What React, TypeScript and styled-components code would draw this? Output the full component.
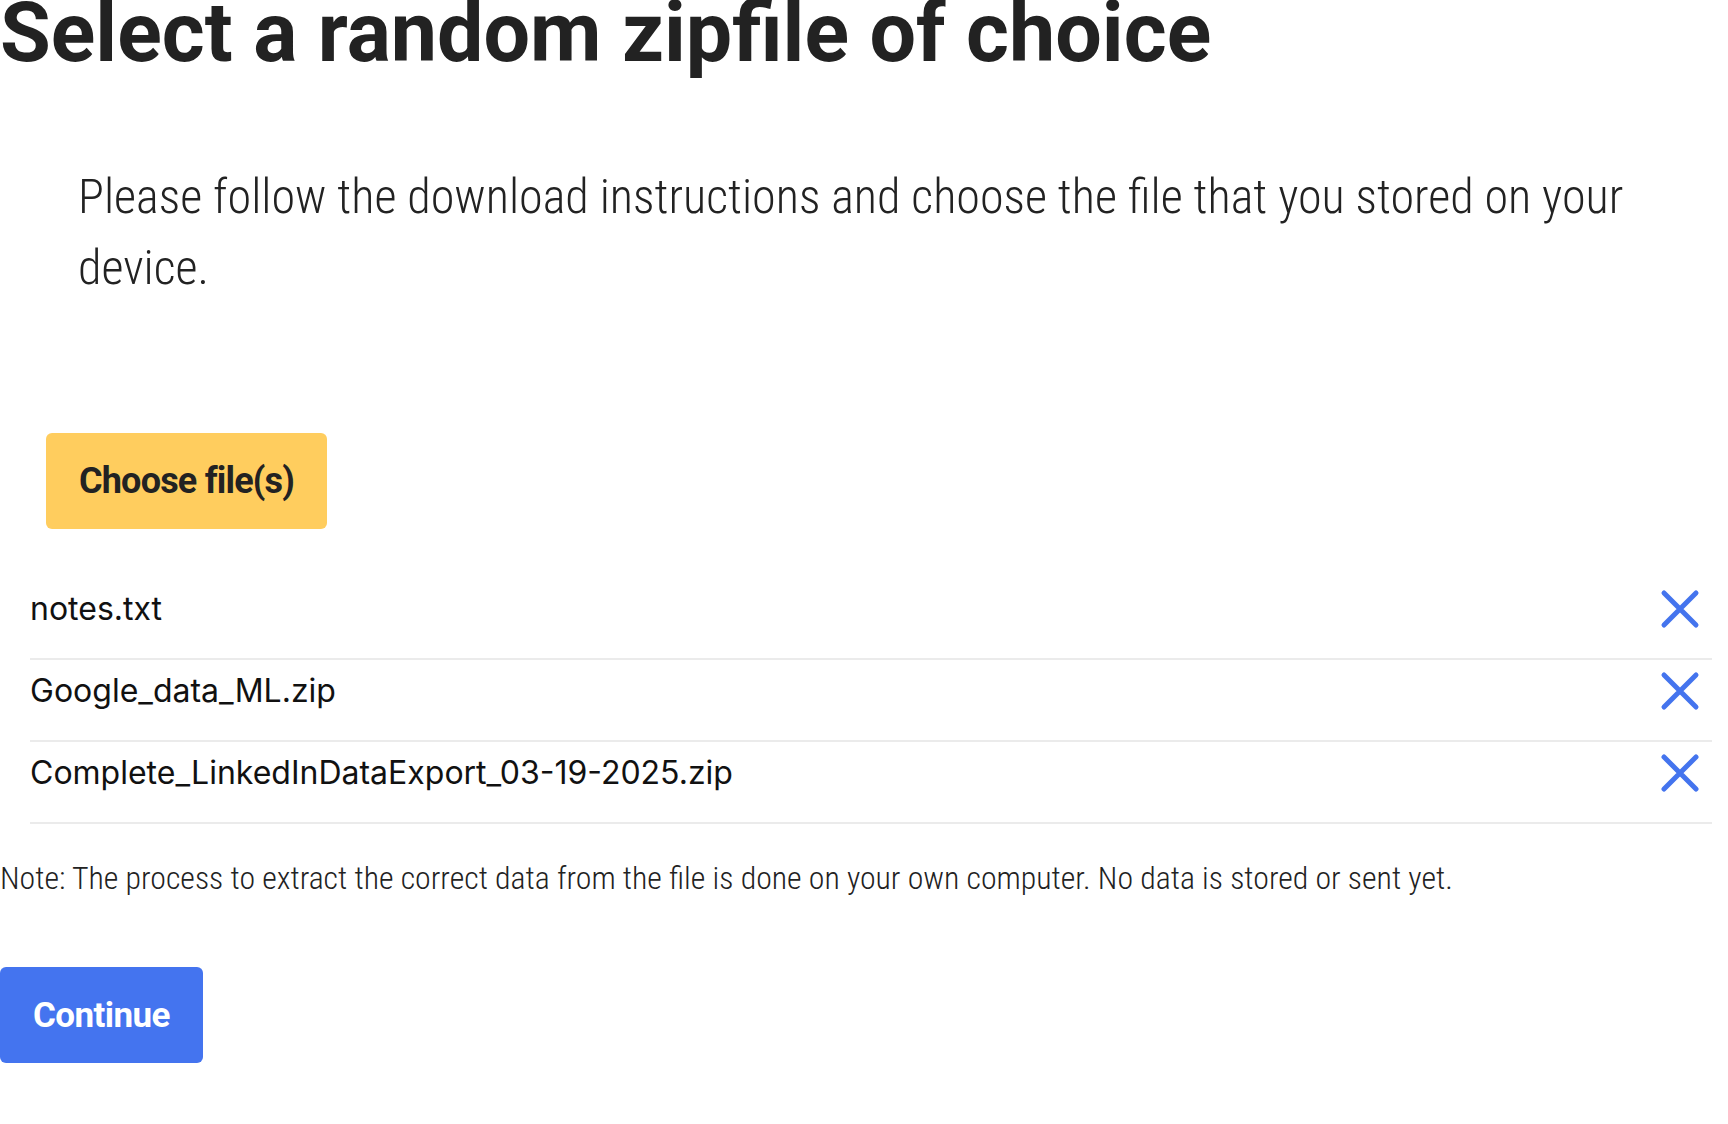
import React from "react";
import styled, { createGlobalStyle } from "styled-components";

const GlobalStyle = createGlobalStyle`
  html, body {
    margin: 0;
    padding: 0;
    background: #ffffff;
  }
  body {
    font-family: Roboto, "Open Sans", sans-serif;
    color: #222222;
  }
  * { box-sizing: border-box; }
`;

const Page = styled.main`
  display: flex;
  flex-direction: column;
  align-items: flex-start;
  width: 100%;
`;

const Title = styled.h1`
  margin: 0;
  font-family: Roboto, sans-serif;
  font-weight: 700;
  font-size: 82.5px;
  line-height: 66px;
  color: #222222;
  white-space: nowrap;
`;

const Intro = styled.p`
  margin: 94.5px 20px 0 78px;
  font-family: "Roboto Condensed", Roboto, sans-serif;
  font-weight: 300;
  font-size: 48.1px;
  line-height: 71px;
  color: #222222;
`;

const ActionButton = styled.button<{ $variant: "yellow" | "blue" }>`
  display: inline-flex;
  align-items: center;
  justify-content: center;
  height: 96px;
  padding: 0 33px;
  border: none;
  border-radius: 6px;
  font-family: Roboto, sans-serif;
  font-weight: 700;
  cursor: pointer;
  background: ${(p) => (p.$variant === "yellow" ? "#ffcd5e" : "#4474ef")};
  color: ${(p) => (p.$variant === "yellow" ? "#222222" : "#ffffff")};
  font-size: ${(p) => (p.$variant === "yellow" ? "36px" : "35px")};
  letter-spacing: ${(p) => (p.$variant === "yellow" ? "-0.8px" : "-0.6px")};
`;

const ChooseButton = styled(ActionButton)`
  margin: 130px 0 0 46px;
`;

const FileList = styled.ul`
  list-style: none;
  margin: 49px 0 0 30px;
  padding: 0;
  width: calc(100% - 46px);
`;

const FileRow = styled.li`
  display: flex;
  align-items: center;
  justify-content: space-between;
  padding: 13px 12px 31px 0;
  border-bottom: 2px solid #ebebeb;
`;

const FileName = styled.span`
  font-family: Inter, "Noto Sans", sans-serif;
  font-weight: 400;
  font-size: 32px;
  line-height: 36px;
  color: #111111;
`;

const RemoveButton = styled.button`
  display: flex;
  align-items: center;
  justify-content: center;
  width: 40px;
  height: 36px;
  padding: 0;
  border: none;
  background: transparent;
  cursor: pointer;
  color: #4474ee;
`;

const Note = styled.p`
  margin: 30.5px 0 0 0;
  font-family: "Roboto Condensed", Roboto, sans-serif;
  font-weight: 300;
  font-size: 31.8px;
  line-height: 48px;
  color: #222222;
  white-space: nowrap;
`;

const ContinueButton = styled(ActionButton)`
  margin: 65px 0 0 0;
`;

const CloseIcon = () => (
  <svg width="40" height="40" viewBox="0 0 40 40" aria-hidden="true">
    <path d="M4 4 L36 36 M36 4 L4 36" stroke="currentColor" strokeWidth="5" strokeLinecap="round" fill="none" />
  </svg>
);

const files = ["notes.txt", "Google_data_ML.zip", "Complete_LinkedInDataExport_03-19-2025.zip"];

export default function App() {
  return (
    <Page>
      <GlobalStyle />
      <Title>Select a random zipfile of choice</Title>
      <Intro>
        Please follow the download instructions and choose the file that you stored on your device.
      </Intro>
      <ChooseButton $variant="yellow">Choose file(s)</ChooseButton>
      <FileList>
        {files.map((f) => (
          <FileRow key={f}>
            <FileName>{f}</FileName>
            <RemoveButton aria-label={`Remove ${f}`}>
              <CloseIcon />
            </RemoveButton>
          </FileRow>
        ))}
      </FileList>
      <Note>
        Note: The process to extract the correct data from the file is done on your own computer. No data is stored or sent yet.
      </Note>
      <ContinueButton $variant="blue">Continue</ContinueButton>
    </Page>
  );
}
